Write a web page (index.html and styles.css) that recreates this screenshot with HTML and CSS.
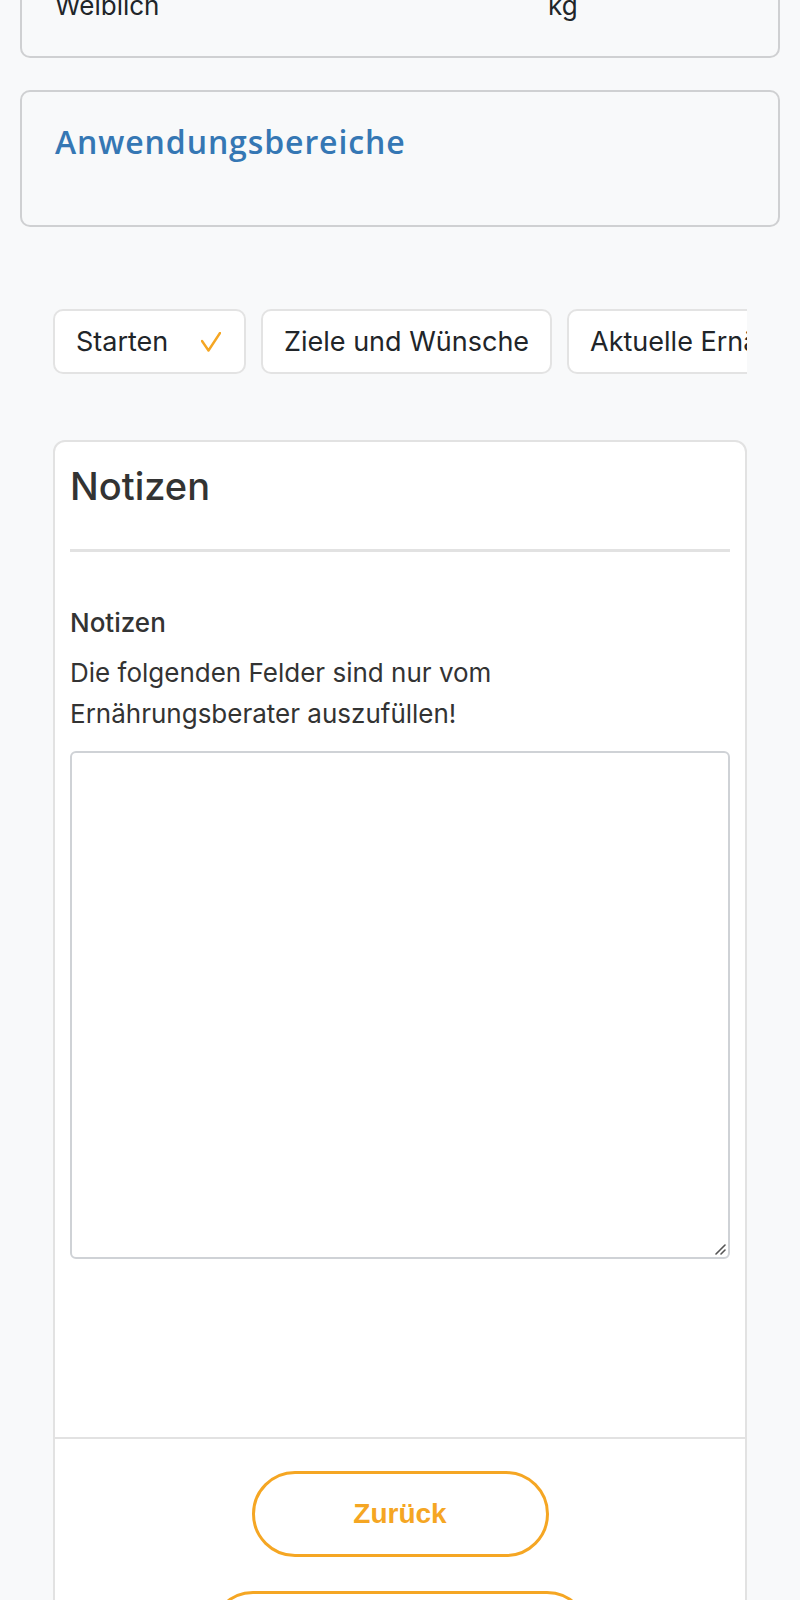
FILE: index.html
```html
<!DOCTYPE html>
<html lang="de">
<head>
  <meta charset="UTF-8">
  <meta name="viewport" content="width=device-width, initial-scale=1.0">
  <title>Ernährungsberatung - Notizen</title>
  <link rel="stylesheet" href="styles.css">
</head>
<body>
  <div class="page">
    <!-- Zusammenfassung der Stammdaten -->
    <div class="summary-card">
      <div class="summary-row">
        <span>Weiblich</span>
        <span>kg</span>
      </div>
    </div>

    <div class="summary-card area-card">
      <h2 class="area-title">Anwendungsbereiche</h2>
    </div>

    <!-- Schritte des Fragebogens -->
    <div class="steps">
      <div class="step done">
        <span>Starten</span>
        <svg class="check" width="20" height="20" viewBox="0 0 20 20">
          <polyline points="1,9 7.5,18.5 19,1" fill="none" stroke="#f5a623" stroke-width="2.4" stroke-linecap="round" stroke-linejoin="round"/>
        </svg>
      </div>
      <div class="step">Ziele und Wünsche</div>
      <div class="step">Aktuelle Ernährung</div>
      <div class="step">Bewegung</div>
    </div>

    <div class="notes-card">
      <div class="notes-body">
        <h1 class="notes-title">Notizen</h1>
        <hr class="notes-rule">
        <label class="field-label" for="notes">Notizen</label>
        <p class="field-help">Die folgenden Felder sind nur vom Ernährungsberater auszufüllen!</p>
        <div class="input-wrap">
          <textarea id="notes" class="notes-input"></textarea>
          <svg class="grip" width="12" height="12" viewBox="0 0 12 12">
            <path d="M11 2 L2 11 M11 7 L7 11" stroke="#555" stroke-width="1.6" stroke-linecap="round"/>
          </svg>
        </div>
      </div>
      <div class="notes-footer">
        <button class="pill-btn">Zurück</button>
        <button class="pill-btn wide">Weiter</button>
      </div>
    </div>
  </div>
</body>
</html>
```

FILE: styles.css
```css
body {
  margin: 0;
  background-color: #f8f9fa;
  color: #212529;
  font-family: Inter, "Noto Sans", sans-serif;
}
.page {
  padding: 0 20px 40px;
}
.summary-card {
  border: 2px solid #cfd0d2;
  border-radius: 10px;
  padding: 20px 33px 34px;
  margin-top: -32px;
}
.summary-row {
  display: grid;
  grid-template-columns: 493px 1fr;
  font-size: 26px;
  line-height: 32px;
}
.area-card {
  margin-top: 32px;
  padding: 31px 33px 64px;
}
.area-title {
  margin: 0;
  font-family: "Open Sans", sans-serif;
  font-weight: 600;
  font-size: 32px;
  letter-spacing: 0.9px;
  line-height: 1.2;
  color: #3577b4;
}
.steps {
  display: flex;
  gap: 15px;
  margin: 82px 33px 0;
  overflow: hidden;
}
.step {
  flex-shrink: 0;
  display: flex;
  align-items: center;
  height: 65px;
  box-sizing: border-box;
  padding: 0 21px;
  background-color: #fff;
  border: 2px solid #e3e3e3;
  border-radius: 10px;
  font-size: 27px;
  white-space: nowrap;
}
.step.done {
  width: 193px;
  justify-content: space-between;
  padding-right: 23px;
}
.check {
  margin-top: 1px;
}
.notes-card {
  margin: 66px 33px 0;
  background-color: #fff;
  border: 2px solid #e2e2e2;
  border-radius: 12px;
}
.notes-body {
  padding: 22px 15px 178px;
}
.notes-title {
  margin: 0;
  font-size: 38px;
  font-weight: 500;
  line-height: 1.2;
  color: #333;
}
.notes-rule {
  margin: 39px 0 0;
  border: none;
  height: 3px;
  background-color: #e2e2e2;
}
.field-label {
  display: block;
  margin-top: 55px;
  font-size: 26px;
  font-weight: 500;
  line-height: 32px;
  color: #333;
}
.field-help {
  max-width: 560px;
  margin: 13px 0 0;
  font-size: 26px;
  line-height: 41px;
  color: #333;
}
.input-wrap {
  position: relative;
  margin-top: 17px;
}
.notes-input {
  display: block;
  width: 100%;
  height: 508px;
  box-sizing: border-box;
  border: 2px solid #cfd2d6;
  border-radius: 6px;
  font-family: inherit;
  font-size: 26px;
  resize: none;
}
.grip {
  position: absolute;
  right: 4px;
  bottom: 4px;
}
.notes-footer {
  border-top: 2px solid #e2e2e2;
  display: flex;
  flex-direction: column;
  align-items: center;
  gap: 34px;
  padding: 32px 0 40px;
}
.pill-btn {
  width: 297px;
  height: 86px;
  background-color: #fff;
  border: 3px solid #f5a623;
  border-radius: 43px;
  color: #f5a623;
  font-family: "Liberation Sans", Arial, sans-serif;
  font-weight: bold;
  font-size: 28px;
  cursor: pointer;
}
.pill-btn.wide {
  width: 380px;
}
```
